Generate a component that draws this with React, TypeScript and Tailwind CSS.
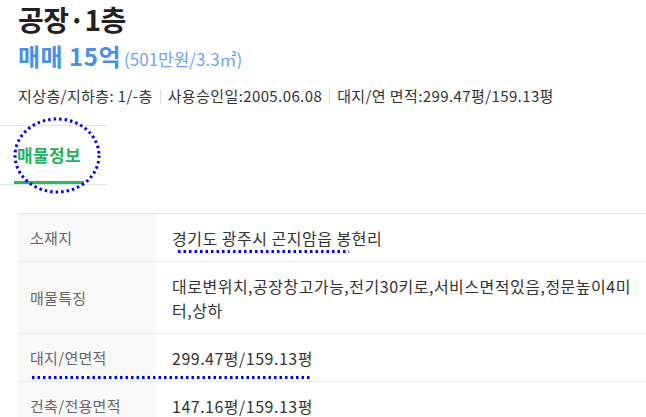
import React from "react";

const INFO = ["지상층/지하층: 1/-층", "사용승인일:2005.06.08", "대지/연 면적:299.47평/159.13평"];

const ROWS = [
  { label: "소재지", value: "경기도 광주시 곤지암읍 봉현리" },
  { label: "매물특징", value: "대로변위치,공장창고가능,전기30키로,서비스면적있음,정문높이4미터,상하" },
  { label: "대지/연면적", value: "299.47평/159.13평" },
  { label: "건축/전용면적", value: "147.16평/159.13평" },
];

export default function App() {
  return (
    <div
      className="relative h-[417px] w-[646px] overflow-hidden bg-white"
      style={{ fontFamily: '"Noto Sans CJK KR", "Noto Sans", sans-serif' }}
    >
      <div className="pl-[18px]">
        <h1 className="text-[28px] font-bold leading-[38px] tracking-[-0.5px] text-[#222]">공장·1층</h1>
        <div className="mt-[3px] flex items-baseline gap-[3px] leading-[30px]">
          <span className="text-[24px] font-bold tracking-[0.5px] text-[#4a8fe7]">매매 15억</span>
          <span className="text-[17px] text-[#6ea4ec]">(501만원/3.3㎡)</span>
        </div>
        <div className="mt-[12px] flex items-center text-[15px] leading-[20px] tracking-[0.4px] text-[#333]">
          {INFO.map((t, i) => (
            <React.Fragment key={t}>
              {i > 0 && <span className="mx-[7px] h-[13px] w-px bg-[#d5d5d5]" />}
              <span>{t}</span>
            </React.Fragment>
          ))}
        </div>
      </div>

      {/* tab */}
      <div className="relative mt-[19px] h-[60px] w-[107px] border-y border-[#e3e3e3] pl-[14px]">
        <div className="flex h-full w-[70px] items-center justify-center text-[17px] font-bold tracking-[0.4px] text-[#1fb25c]">
          매물정보
        </div>
        <div className="absolute bottom-0 left-[14px] h-[3px] w-[70px] bg-[#1fbf5f]" />
      </div>

      {/* table */}
      <div className="ml-[18px] mt-[28px] border-t border-[#e5e5e5] leading-[24px]">
        {ROWS.map((r) => (
          <div key={r.label} className="flex border-b border-[#ececec]">
            <div className="flex w-[138px] shrink-0 items-center bg-[#f8f8f8] px-[12px] py-[11.5px] text-[15px] tracking-[0.3px] text-[#666]">
              {r.label}
            </div>
            <div className="flex-1 break-all py-[11.5px] pl-[16px] pr-[10px] text-[16px] tracking-[0.5px] text-[#333]">
              {r.value}
            </div>
          </div>
        ))}
      </div>

      {/* annotations */}
      <svg className="pointer-events-none absolute left-0 top-0" width="646" height="417">
        <ellipse
          cx="57"
          cy="155.5"
          rx="42"
          ry="36.5"
          fill="none"
          stroke="#0000ff"
          strokeWidth="3"
          strokeDasharray="2.5 3"
        />
        <line x1="178" y1="251.5" x2="349" y2="251.5" stroke="#0000ff" strokeWidth="3" strokeDasharray="2.5 3" />
        <line x1="32" y1="377.5" x2="312" y2="377.5" stroke="#0000ff" strokeWidth="3" strokeDasharray="2.5 3" />
      </svg>
    </div>
  );
}
